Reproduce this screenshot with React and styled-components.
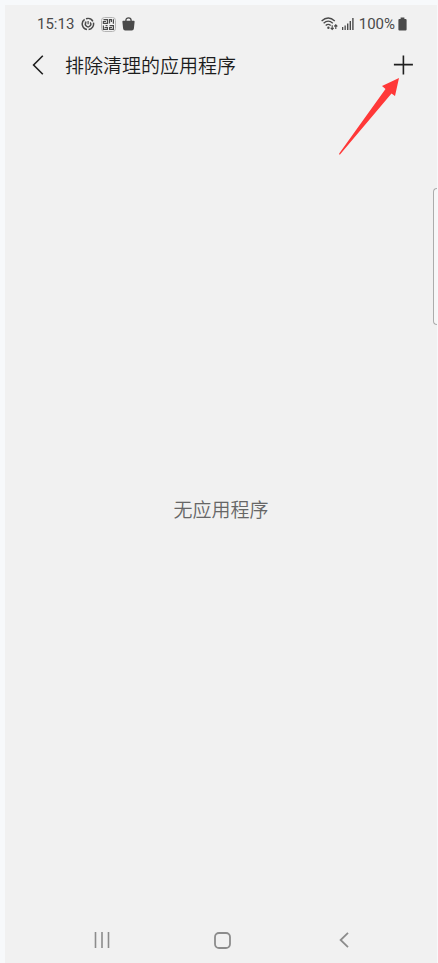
import React from 'react'
import styled, { createGlobalStyle } from 'styled-components'

const GlobalStyle = createGlobalStyle`
  * {
    box-sizing: border-box;
  }

  body {
    margin: 0;
    background: #f7f9fb;
    font-family: Roboto, 'Noto Sans CJK SC', sans-serif;
  }
`

const Screen = styled.div`
  position: relative;
  display: flex;
  flex-direction: column;
  min-height: calc(100vh - 5px);
  margin: 5px 1px 0 5px;
  background: #f1f1f1;
`

const StatusBar = styled.div`
  display: flex;
  align-items: center;
  justify-content: space-between;
  height: 38px;
  padding: 0 30px 0 32px;
  color: #4a4a4a;
  font-size: 15px;
  line-height: 20px;
`

const StatusGroup = styled.div`
  display: flex;
  align-items: center;
  gap: ${props => props.$gap}px;
`

const StatusIcon = styled.svg`
  display: block;
  flex: none;
`

const Header = styled.header`
  position: relative;
  display: flex;
  align-items: center;
  height: 44px;
  padding: 0 18px 0 17px;
`

const IconButton = styled.button`
  display: flex;
  align-items: center;
  justify-content: center;
  width: 32px;
  height: 32px;
  padding: 0;
  border: 0;
  background: none;
  color: ${props => props.$color || '#1f1f1f'};
  cursor: pointer;
`

const Title = styled.h1`
  flex: 1;
  margin: 0;
  padding-left: 11px;
  color: #1c1c1c;
  font-family: 'Noto Sans CJK SC', sans-serif;
  font-size: 19px;
  font-weight: 350;
  line-height: 28px;
`

const Pointer = styled.svg`
  position: absolute;
  top: 35px;
  right: 38px;
  pointer-events: none;
`

const Content = styled.main`
  flex: 1;
  display: flex;
  align-items: center;
  justify-content: center;
  padding-top: 14px;
`

const EmptyText = styled.p`
  margin: 0;
  color: #666;
  font-family: 'Noto Sans CJK SC', sans-serif;
  font-size: 19px;
  font-weight: 350;
  line-height: 28px;
`

const EdgeHandle = styled.div`
  position: absolute;
  top: 183px;
  right: 0;
  width: 4px;
  height: 137px;
  border: 1px solid #acacac;
  border-right: 0;
  border-radius: 5px 0 0 5px;
  background: #f7f7f7;
`

const NavBar = styled.nav`
  display: grid;
  grid-template-columns: repeat(3, 1fr);
  justify-items: center;
  align-items: center;
  height: 46px;
  padding: 0 33px 0 36px;
`

const SyncIcon = () => (
  <StatusIcon width='14' height='14' viewBox='0 0 14 14' fill='none' stroke='currentColor'>
    <path d='M3.6 2.4A5.6 5.6 0 0 0 6 12.5M7.6 12.6A5.6 5.6 0 0 0 12.4 5.6M11.9 4.3A5.6 5.6 0 0 0 5 1.8' strokeWidth='1.5' />
    <path d='M5 5.4A2.7 2.7 0 1 0 9.2 5.4' strokeWidth='1.4' />
    <path d='M7.1 4V7.2M3.8 5.2H5.4' strokeWidth='1.2' />
  </StatusIcon>
)

const QrIcon = () => (
  <StatusIcon width='15' height='15' viewBox='0 0 15 15' fill='none' stroke='currentColor'>
    <rect x='0.5' y='0.5' width='14' height='14' rx='3' stroke='#b4b4b4' />
    <path
      d='M2.5 2.6H6.5V6.4H2.4V4.5H5M8.5 6.5V2.6H10.4V5M12.4 2.2V6.8M2.4 8.6V12.4H6.4V10.5H3.6M4.6 8.6H6.5M8.6 8.6H12.4V12.4H8.6V10.5H11'
      strokeWidth='1.2'
    />
  </StatusIcon>
)

const BagIcon = () => (
  <StatusIcon width='13' height='14' viewBox='0 0 13 14'>
    <path d='M3.9 4.6V3.2A2.6 2.3 0 0 1 9.1 3.2V4.6' fill='none' stroke='currentColor' strokeWidth='1.3' />
    <path d='M1.2 3.8H11.8Q12.7 3.8 12.6 4.7L11.9 11.4Q11.7 13.4 9.8 13.4H3.2Q1.3 13.4 1.1 11.4L0.4 4.7Q0.3 3.8 1.2 3.8Z' fill='currentColor' />
  </StatusIcon>
)

const WifiIcon = () => (
  <StatusIcon width='17' height='14' viewBox='0 0 17 14' fill='none' stroke='currentColor'>
    <path d='M0.6 4Q7.2 -2 13.8 4M2.6 6.3Q7.2 2 11.8 6.3M4.7 8.5Q7.2 6.2 9.7 8.5' strokeWidth='1.3' />
    <circle cx='7.4' cy='10.8' r='1.2' fill='currentColor' stroke='none' />
    <path d='M11.2 8.2V12.3M9.7 10.8L11.2 12.4L12.7 10.8M14.8 12V8M13.3 9.5L14.8 7.9L16.3 9.5' strokeWidth='1.1' />
  </StatusIcon>
)

const SignalIcon = () => (
  <StatusIcon width='12' height='12' viewBox='0 0 12 12' fill='currentColor'>
    <path d='M0 9H1.3V12H0ZM2.5 7.5H3.8V12H2.5ZM5 5.5H6.4V12H5ZM7.6 3H9V12H7.6ZM10.2 0H11.6V12H10.2Z' />
  </StatusIcon>
)

const BatteryIcon = () => (
  <StatusIcon width='9' height='14' viewBox='0 0 9 14' fill='currentColor'>
    <path d='M2.6 0.6H6.4V2H7.6Q8.6 2 8.6 3V12.4Q8.6 13.4 7.6 13.4H1.4Q0.4 13.4 0.4 12.4V3Q0.4 2 1.4 2H2.6Z' />
  </StatusIcon>
)

const App = () => (
  <>
    <GlobalStyle />
    <Screen>
      <StatusBar>
        <StatusGroup $gap={7}>
          <span>15:13</span>
          <StatusGroup $gap={6}>
            <SyncIcon />
            <QrIcon />
            <BagIcon />
          </StatusGroup>
        </StatusGroup>
        <StatusGroup $gap={5}>
          <StatusGroup $gap={4}>
            <WifiIcon />
            <SignalIcon />
          </StatusGroup>
          <StatusGroup $gap={3}>
            <span>100%</span>
            <BatteryIcon />
          </StatusGroup>
        </StatusGroup>
      </StatusBar>

      <Header>
        <IconButton type='button' aria-label='返回'>
          <svg width='12' height='20' viewBox='0 0 12 20' fill='none' stroke='currentColor' strokeWidth='1.6'>
            <path d='M10.8 0.8L1.6 10L10.8 19.2' />
          </svg>
        </IconButton>
        <Title>排除清理的应用程序</Title>
        <IconButton type='button' aria-label='添加'>
          <svg width='20' height='20' viewBox='0 0 20 20' fill='none' stroke='currentColor' strokeWidth='1.6'>
            <path d='M10.4 0.5V19.5M0.9 9.6H19.9' />
          </svg>
        </IconButton>
        <Pointer width='60' height='77' viewBox='0 0 60 77' fill='#ff3838' aria-hidden='true'>
          <path d='M60 0L56 18L52.5 15.5L1 76.5Q0 77 0.2 75.5L46.5 11L43 8Z' />
        </Pointer>
      </Header>

      <Content>
        <EmptyText>无应用程序</EmptyText>
      </Content>

      <EdgeHandle />

      <NavBar>
        <IconButton type='button' aria-label='最近任务' $color='#8c8c8c'>
          <svg width='16' height='16' viewBox='0 0 16 16' fill='none' stroke='currentColor' strokeWidth='1.6'>
            <path d='M1.5 0V16M8 0V16M14.5 0V16' />
          </svg>
        </IconButton>
        <IconButton type='button' aria-label='主屏幕' $color='#8c8c8c'>
          <svg width='17' height='17' viewBox='0 0 17 17' fill='none' stroke='currentColor' strokeWidth='1.8'>
            <rect x='1' y='1' width='15' height='15' rx='4' />
          </svg>
        </IconButton>
        <IconButton type='button' aria-label='返回上一页' $color='#8c8c8c'>
          <svg width='10' height='16' viewBox='0 0 10 16' fill='none' stroke='currentColor' strokeWidth='1.8'>
            <path d='M9 0.8L1.6 8L9 15.2' />
          </svg>
        </IconButton>
      </NavBar>
    </Screen>
  </>
)

export default App
